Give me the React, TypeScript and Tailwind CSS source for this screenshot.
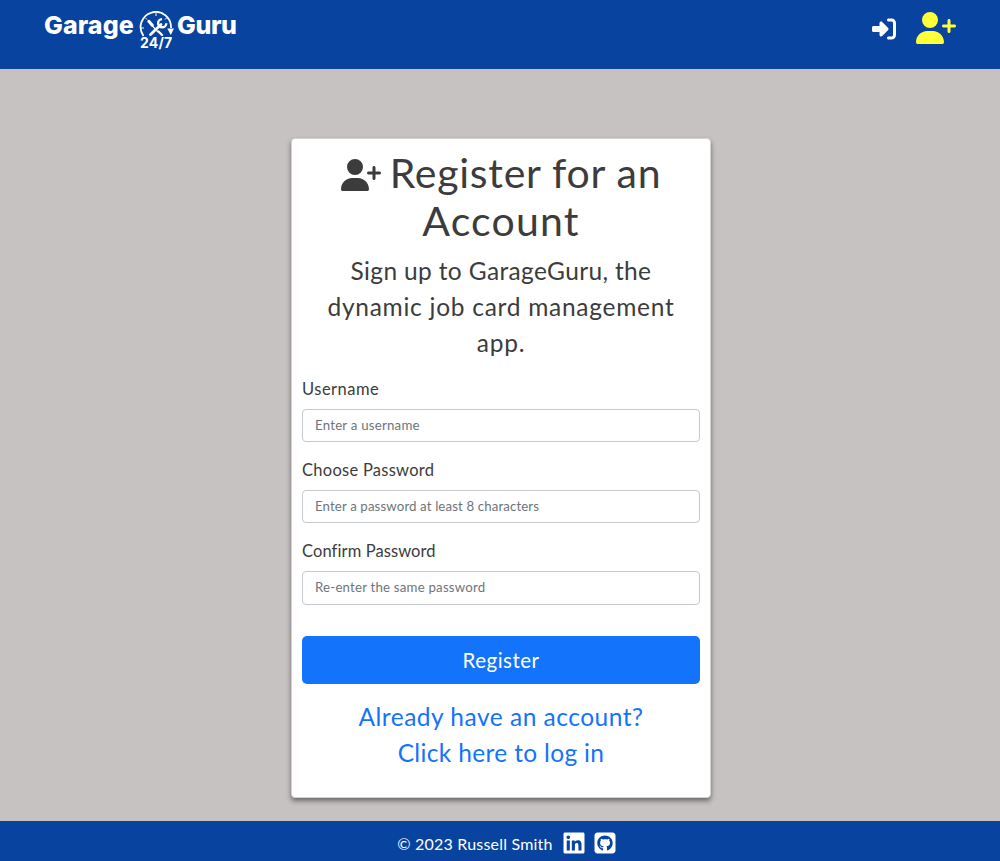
import { FaLinkedin, FaRightToBracket, FaSquareGithub, FaUserPlus } from "react-icons/fa6";

const fields = [
  { id: "username", type: "text", label: "Username", hint: "Enter a username", labelClass: "tracking-[0.5px]", inputClass: "tracking-[0.22px]", rowClass: "h-[81px]", boxClass: "h-[33px]" },
  { id: "password1", type: "password", label: "Choose Password", hint: "Enter a password at least 8 characters", labelClass: "tracking-[0.27px]", inputClass: "tracking-[0.12px]", rowClass: "h-[81px]", boxClass: "h-[33px]" },
  { id: "password2", type: "password", label: "Confirm Password", hint: "Re-enter the same password", labelClass: "tracking-[0.1px]", inputClass: "tracking-[0.2px]", rowClass: "h-[97px]", boxClass: "h-[34px]" },
];

function ClockTools() {
  return (
    <svg viewBox="0 0 36 28" className="absolute left-[95px] top-px h-7 w-9" fill="none" stroke="#fff">
      <path d="M5.5 25A15.2 15.2 0 1 1 33 17" strokeWidth="1.8" />
      <path d="M29.3 17.5h6.7l-3.2 6.5z" fill="#fff" stroke="none" />
      <path d="M18 2v3M3 17h3M7.5 7l1.5 1.5M28.5 7 27 8.5" strokeWidth="1" />
      <path d="m12.5 23.5 10.5-10" strokeWidth="2.8" strokeLinecap="round" />
      <path d="M28.3 12.2a4.1 4.1 0 1 1-4.2-4.1" strokeWidth="2.4" />
      <path d="m10.8 10.3 3.5 4" strokeWidth="3" strokeLinecap="round" />
      <path d="m14 14.5 6 6.5" strokeWidth="1.2" />
      <path d="m20.5 20.5 3.5 3.5" strokeWidth="2.4" strokeLinecap="round" />
    </svg>
  );
}

function Logo() {
  return (
    <a href="#" aria-label="GarageGuru 24/7" className="relative flex h-10 w-[196px] font-['Inter',sans-serif] text-[25px] leading-[30px] font-extrabold text-white">
      <span className="w-[134px] pl-px tracking-[0.1px]">Garage</span>
      <span className="tracking-[-0.4px]">Guru</span>
      <ClockTools />
      <span className="absolute left-[97px] top-[25px] text-[14px] leading-4 font-bold tracking-[0.2px]">24/7</span>
    </a>
  );
}

export default function App() {
  return (
    <div className="flex h-[861px] flex-col bg-[#c6c2c1] font-['Lato',sans-serif] text-[#3c3c3c]">
      <header className="flex h-[69px] shrink-0 items-start justify-between bg-[#07439f] pt-[10px] pr-11 pl-[43px]">
        <Logo />
        <nav className="flex items-end gap-5 pt-0.5">
          <a href="#" aria-label="Log in" className="pb-[3px]"><FaRightToBracket className="size-6 text-white" /></a>
          <a href="#" aria-label="Register"><FaUserPlus className="h-8 w-10 text-[#ffff38]" /></a>
        </nav>
      </header>

      <main className="flex flex-1 justify-center pt-[69px] pl-[2px]">
        <section className="h-[660px] w-[420px] rounded border border-[#d5d3d2] bg-white px-[10px] pt-[10px] shadow-[0_3px_5px_rgba(0,0,0,0.45)]">
          <h1 className="mb-2 text-center text-[41px] leading-[48px] tracking-[0.75px]">
            <FaUserPlus className="mr-[9px] inline-block h-8 w-10 align-[-3px]" />
            Register for an
            <br />
            <span className="tracking-[1.2px]">Account</span>
          </h1>
          <p className="text-center text-[24.5px] leading-9">
            <span className="tracking-[0.35px]">Sign up to GarageGuru, the</span>
            <br />
            <span className="tracking-[0.73px]">dynamic job card management</span>
            <br />
            <span className="tracking-[0.8px]">app.</span>
          </p>
          <form className="pt-4">
            {fields.map((f) => (
              <div key={f.id} className={f.rowClass}>
                <label htmlFor={f.id} className={`mb-2 block text-[16.5px] leading-6 ${f.labelClass}`}>{f.label}</label>
                <input
                  id={f.id}
                  type={f.type}
                  placeholder={f.hint}
                  className={`block w-full rounded border border-[#c5cad0] bg-white px-3 pb-0.5 text-[13.25px] placeholder:text-[#6c757d] ${f.boxClass} ${f.inputClass}`}
                />
              </div>
            ))}
            <button type="button" className="block h-12 w-full rounded-[5px] bg-[#1473fb] text-[20.5px] tracking-[0.5px] text-white">Register</button>
          </form>
          <a href="#" className="mt-[15px] block text-center text-[24.5px] leading-9 text-[#1473fb]">
            <span className="tracking-[0.5px]">Already have an account?</span>
            <br />
            <span className="tracking-[0.35px]">Click here to log in</span>
          </a>
        </section>
      </main>

      <footer className="flex h-10 shrink-0 items-center justify-center bg-[#07439f] pt-1 pl-[14px] text-white">
        <span className="mr-[9px] pt-px tracking-[0.2px]">© 2023 Russell Smith</span>
        <FaLinkedin className="mr-[7px] size-6" />
        <FaSquareGithub className="size-6" />
      </footer>
    </div>
  );
}
